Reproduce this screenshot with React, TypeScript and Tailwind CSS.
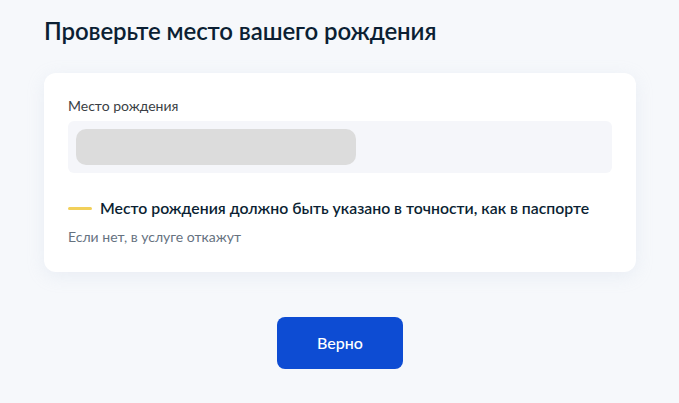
export default function App() {
  return (
    <div className="min-h-[403px] w-[679px] bg-[#f6f8fb] font-['Lato','Noto_Sans',sans-serif] text-[#0b1f33]">
      <div className="px-[44px] pt-[15px]">
        <h1 className="text-[24px] font-semibold leading-[32px] tracking-[-0.1px]">
          Проверьте место вашего рождения
        </h1>

        <div className="mt-[26px] w-[592px] rounded-xl bg-white px-6 pt-[24px] pb-[26px] shadow-[0_4px_18px_rgba(180,195,215,0.18)]">
          <div className="text-[14px] leading-[18px] text-[#3a3f45]">Место рождения</div>
          <div className="mt-[6px] flex h-[52px] items-center rounded-md bg-[#f5f6fa] px-2">
            <div className="h-9 w-[280px] rounded-[10px] bg-[#dcdcdc]" />
          </div>

          <div className="mt-[25px] flex items-center gap-2">
            <div className="h-[3px] w-6 rounded-full bg-[#f2d05a]" />
            <div className="text-[15.8px] font-semibold leading-[20px] text-[#0b1f33]">
              Место рождения должно быть указано в точности, как в паспорте
            </div>
          </div>
          <div className="mt-[10px] text-[14px] leading-[18px] text-[#66727f]">
            Если нет, в услуге откажут
          </div>
        </div>

        <div className="mt-[45px] flex w-[592px] justify-center">
          <button className="h-[52px] w-[126px] rounded-lg bg-[#0d4cd3] text-[16px] font-medium text-white">
            Верно
          </button>
        </div>
      </div>
    </div>
  );
}
